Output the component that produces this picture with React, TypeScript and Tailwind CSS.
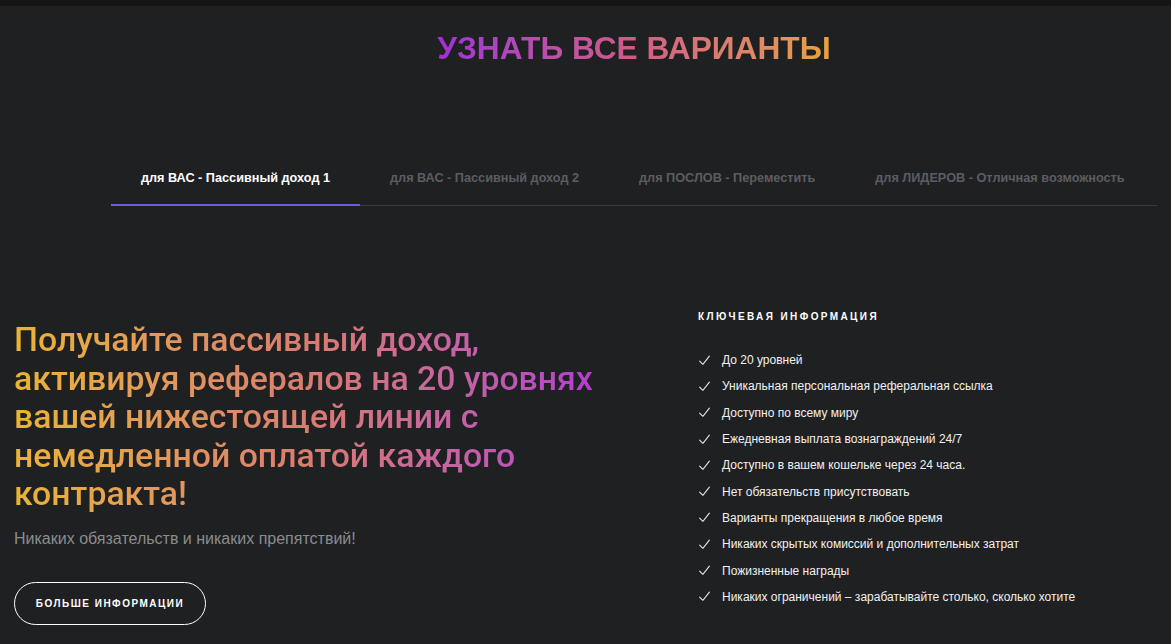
const tabs = [
  "для ВАС - Пассивный доход 1",
  "для ВАС - Пассивный доход 2",
  "для ПОСЛОВ - Переместить",
  "для ЛИДЕРОВ - Отличная возможность",
];

const features = [
  "До 20 уровней",
  "Уникальная персональная реферальная ссылка",
  "Доступно по всему миру",
  "Ежедневная выплата вознаграждений 24/7",
  "Доступно в вашем кошельке через 24 часа.",
  "Нет обязательств присутствовать",
  "Варианты прекращения в любое время",
  "Никаких скрытых комиссий и дополнительных затрат",
  "Пожизненные награды",
  "Никаких ограничений – зарабатывайте столько, сколько хотите",
];

const Check = () => (
  <svg width="13" height="13" viewBox="0 0 24 24" fill="none" stroke="currentColor" strokeWidth="2" strokeLinecap="round" strokeLinejoin="round" className="shrink-0 text-gray-200">
    <path d="M3 13l6 6L21 4" />
  </svg>
);

const App = () => {
  return (
    <div className="w-full min-h-[644px] bg-[#1f2022] font-['Liberation_Sans',Arial,sans-serif] overflow-hidden">
      <div className="h-[6px] bg-[#151516]" />

      <div className="ml-[111px] w-[1046px]">
        <h2 className="pt-[22px] text-center text-[31.7px] leading-[40px] font-bold">
          <span className="bg-gradient-to-r from-[#a22ed6] via-[#cf5c86] to-[#e8a23e] bg-clip-text text-transparent">
            УЗНАТЬ ВСЕ ВАРИАНТЫ
          </span>
        </h2>

        <div className="mt-[101px] flex border-b border-[#3a3b3e]">
          {tabs.map((t, i) => (
            <div
              key={i}
              className={
                i === 0
                  ? "whitespace-nowrap px-[30px] pb-[16px] text-[12.7px] font-bold text-white border-b-2 border-[#6f5ce0] -mb-px"
                  : "whitespace-nowrap px-[30px] pb-[16px] text-[12.7px] font-bold text-[#5c5d61]"
              }
            >
              {t}
            </div>
          ))}
        </div>
      </div>

      <div className="mt-[99px] flex">
        <div className="w-[684px] pl-[14px] pt-[16px]">
          <h1 className="w-[610px] font-['Roboto',sans-serif] text-[33.8px] leading-[38.5px] font-medium bg-gradient-to-r from-[#eab531] via-[#d97a72] to-[#b12fd6] bg-clip-text text-transparent">
            Получайте пассивный доход, активируя рефералов на 20 уровнях вашей нижестоящей линии с немедленной оплатой каждого контракта!
          </h1>
          <p className="mt-[13px] text-[16px] text-[#8b8c8f]">Никаких обязательств и никаких препятствий!</p>
          <button className="mt-[31px] h-[43px] w-[192px] rounded-full border-[1.5px] border-white text-[10px] font-bold tracking-[1.5px] text-white">
            БОЛЬШЕ ИНФОРМАЦИИ
          </button>
        </div>

        <div className="pl-[14px] pt-[4px]">
          <div className="text-[10px] font-bold tracking-[2.4px] text-white">КЛЮЧЕВАЯ ИНФОРМАЦИЯ</div>
          <ul className="mt-[23px] flex flex-col">
            {features.map((f, i) => (
              <li key={i} className="flex h-[26.3px] items-center gap-[11px] text-[12px] text-[#f1f1f1]">
                <Check />
                <span>{f}</span>
              </li>
            ))}
          </ul>
        </div>
      </div>
    </div>
  );
};

export default App;
